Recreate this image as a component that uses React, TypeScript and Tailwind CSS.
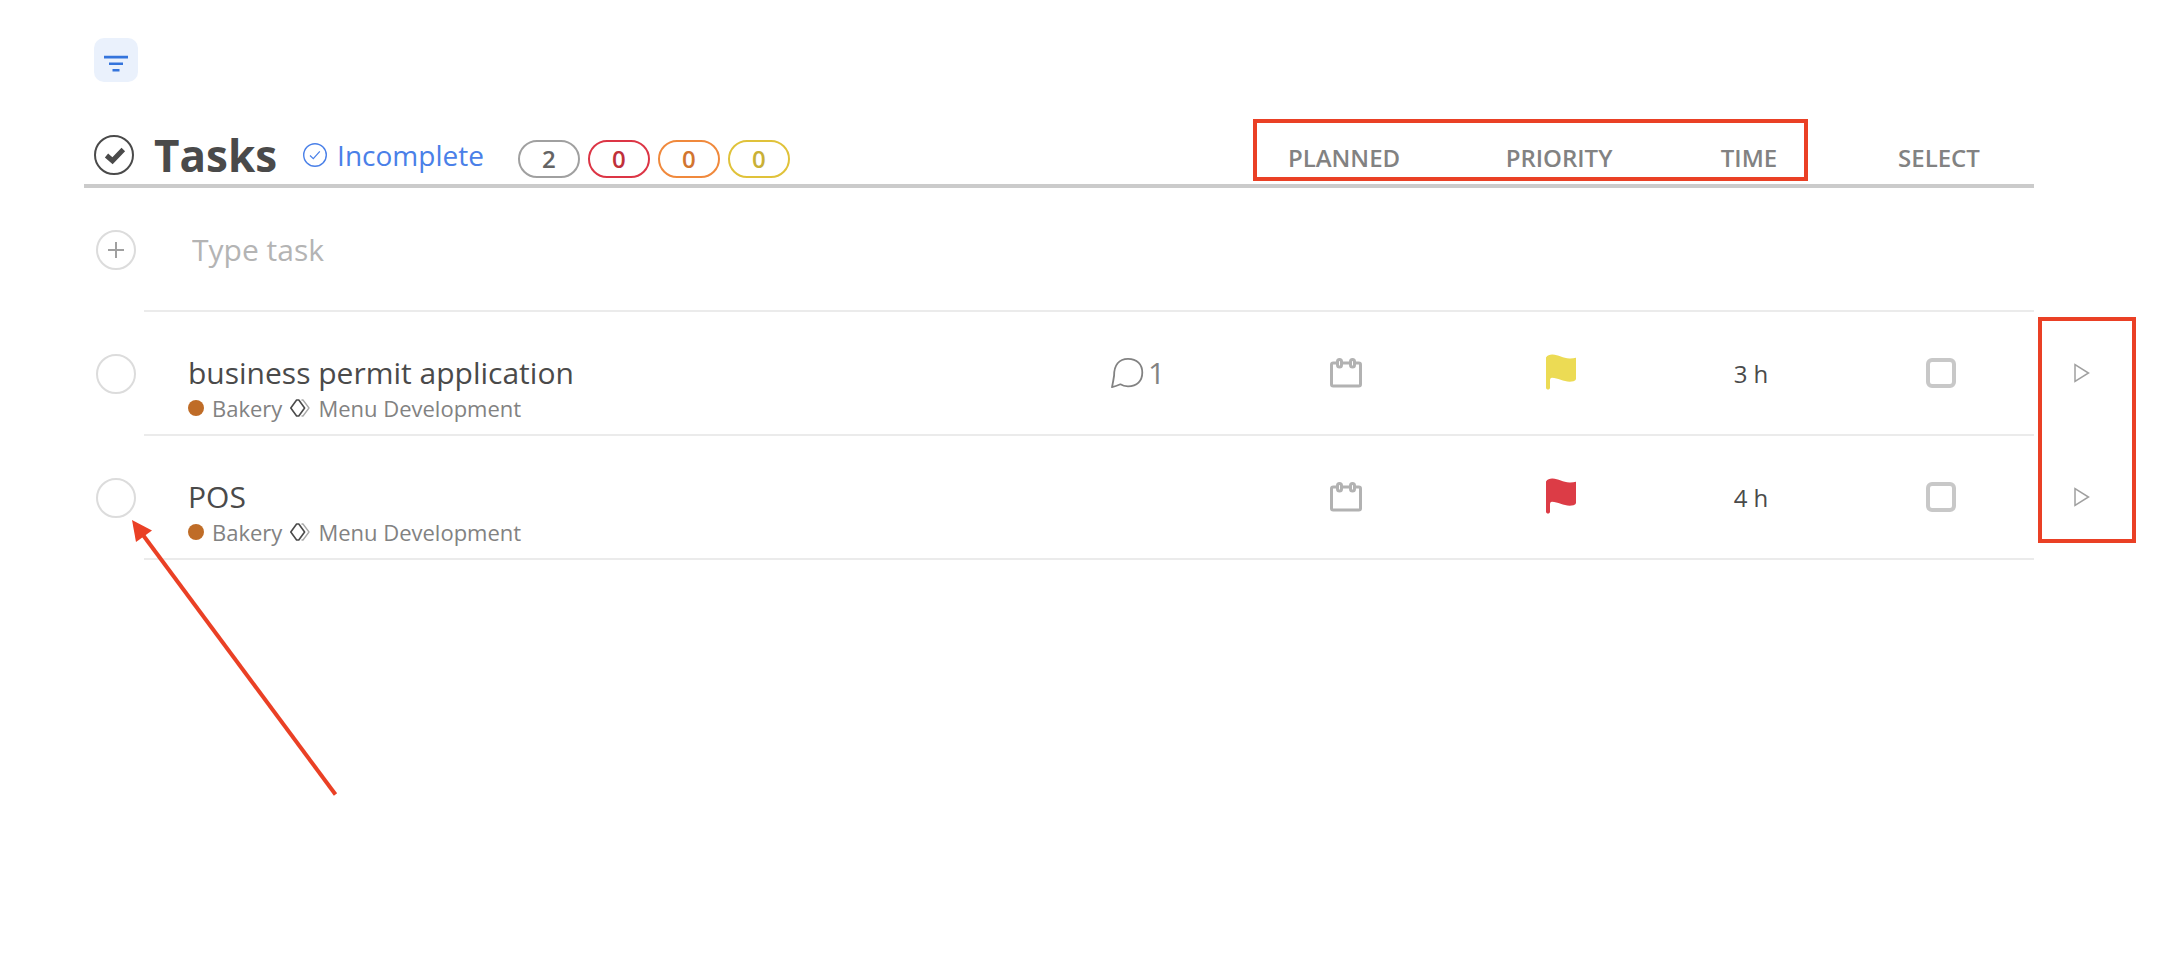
import { useState } from 'react'
import clsx from 'clsx'

type Task = {
  id: string
  name: string
  project: string
  list: string
  comments?: number
  flag: string
  time: string
}

const tasks: Task[] = [
  {
    id: 'permit',
    name: 'business permit application',
    project: 'Bakery',
    list: 'Menu Development',
    comments: 1,
    flag: 'text-[#ecdb54]',
    time: '3 h',
  },
  {
    id: 'pos',
    name: 'POS',
    project: 'Bakery',
    list: 'Menu Development',
    flag: 'text-[#dc3c46]',
    time: '4 h',
  },
]

const counters = [
  { label: 'Open', value: 2, color: 'border-[#a0a0a0] text-[#646464]' },
  { label: 'High', value: 0, color: 'border-[#dc3545] text-[#c0303a]' },
  { label: 'Medium', value: 0, color: 'border-[#f0893c] text-[#d2752f]' },
  { label: 'Low', value: 0, color: 'border-[#e0c23a] text-[#c9b036]' },
]

const FilterIcon = () => (
  <svg width="24" height="18" viewBox="0 0 24 18" fill="currentColor" aria-hidden="true">
    <path d="M0 .8h24v2.6H0zM5 7.5h14v2.6H5zM8.5 14h7v2.6h-7z" />
  </svg>
)

const TasksIcon = () => (
  <svg width="40" height="40" viewBox="0 0 40 40" fill="none" stroke="currentColor" aria-hidden="true">
    <circle cx="20" cy="20" r="19" strokeWidth="2" />
    <path d="m12.500 20.500 6 5.200L29.300 14.500" strokeWidth="5" />
  </svg>
)

const IncompleteIcon = () => (
  <svg width="24" height="24" viewBox="0 0 24 24" fill="none" stroke="currentColor" aria-hidden="true">
    <circle cx="12" cy="12" r="11.3" strokeWidth="1.4" />
    <path d="m7 12.500 3.300 3.200 6.500-7.400" strokeWidth="1.200" />
  </svg>
)

const PlusIcon = () => (
  <svg width="16" height="16" viewBox="0 0 16 16" stroke="currentColor" strokeWidth="2" aria-hidden="true">
    <path d="M8 0v16M0 8h16" />
  </svg>
)

const MilestoneIcon = () => (
  <svg width="20" height="18" viewBox="0 0 20 18" fill="none" strokeLinejoin="round" aria-hidden="true">
    <path d="M11.500 1H13l6 8-6 8h-1.500" stroke="#a8a8a8" strokeWidth="1.300" />
    <path d="M6.600 1h2.200L14.600 9 8.800 17H6.600L.8 9z" stroke="#4a4a4a" strokeWidth="1.600" />
  </svg>
)

const CommentIcon = () => (
  <svg
    width="34"
    height="32"
    viewBox="0 0 34 32"
    fill="none"
    stroke="currentColor"
    strokeWidth="1.800"
    strokeLinejoin="round"
    aria-hidden="true"
  >
    <path d="M2 30.200C3 25.500 3.600 22 4.100 18.500 4 8 9 1.800 18 1.800c9 0 14.300 5.500 14.300 13.700 0 8.500-5.300 13.800-14.300 13.800-2.800 0-5.300-.5-7.600-2-2.700 1.200-5.600 2.300-8.400 2.900z" />
  </svg>
)

const CalendarIcon = () => (
  <svg width="32" height="30" viewBox="0 0 32 30" fill="none" stroke="currentColor" aria-hidden="true">
    <path
      d="M7 5H3.200Q1.500 5 1.500 6.700v19.600Q1.500 28 3.200 28h25.600q1.700 0 1.700-1.700V6.700Q30.500 5 28.800 5H25M12 5h8"
      strokeWidth="3"
    />
    <rect x="7.500" y="1.500" width="4" height="7.500" rx="2" strokeWidth="3" />
    <rect x="20.500" y="1.500" width="4" height="7.500" rx="2" strokeWidth="3" />
  </svg>
)

const FlagIcon = () => (
  <svg width="30" height="36" viewBox="0 0 30 36" fill="currentColor" aria-hidden="true">
    <path d="M0 3.500C1.500 1.200 4 .5 6.500.6c6 .2 10.500 3.700 17 3.900 2.400.1 4.500-.2 6.500-.8v20.800c0 1.500-1 2.300-2.500 2.700-8 2-14.500-3.200-21.500-3.500-1.500 0-2 1-2 3v7c0 2.400-4 2.400-4 0z" />
  </svg>
)

const PlayIcon = () => (
  <svg width="16" height="20" viewBox="0 0 16 20" fill="none" stroke="currentColor" strokeWidth="1.500" aria-hidden="true">
    <path d="M1 1.500v17L14.500 10z" />
  </svg>
)

const ColumnHead = ({ children }: { children: string }) => (
  <th
    scope="col"
    className="border-b-4 border-[#cbcbcb] pt-[14px] pr-0.5 pb-0 pl-0 text-2xl leading-8 font-semibold text-[#828282]"
  >
    {children}
  </th>
)

const TaskRow = ({ task }: { task: Task }) => {
  const [done, setDone] = useState(false)
  const [selected, setSelected] = useState(false)
  const cell = 'border-b-2 border-[#ebebeb] p-0 pl-0.5 text-center'

  return (
    <tr className="h-[124px]">
      <td className="p-0 pl-3">
        <input
          type="checkbox"
          aria-label={`Complete ${task.name}`}
          checked={done}
          onChange={() => setDone(!done)}
          className="block size-10 appearance-none rounded-full border-2 border-[#dcdcdc] checked:bg-[#dcdcdc]"
        />
      </td>
      <td className="border-b-2 border-[#ebebeb] pt-[41px] pr-0 pb-0 pl-11 align-top">
        <div className="text-[30px] leading-10 text-[#4a4a4a]">{task.name}</div>
        <div className="flex items-center text-[22px] leading-[30px] text-[#828282]">
          <span className="mr-2 size-4 rounded-full bg-[#bf6c27]" />
          <span className="mr-2">{task.project}</span>
          <MilestoneIcon />
          <span className="ml-2">{task.list}</span>
        </div>
      </td>
      <td className="border-b-2 border-[#ebebeb] p-0">
        {task.comments && (
          <button type="button" aria-label="Comments" className="flex items-center gap-1 text-[30px] leading-10 text-[#828282]">
            <CommentIcon />
            {task.comments}
          </button>
        )}
      </td>
      <td className={cell}>
        <button type="button" aria-label="Plan task" className="mx-auto block text-[#b2b2b2]">
          <CalendarIcon />
        </button>
      </td>
      <td className={cell}>
        <button type="button" aria-label="Set priority" className={clsx('mx-auto block pb-0.5', task.flag)}>
          <FlagIcon />
        </button>
      </td>
      <td className={clsx(cell, 'pt-0.5 text-2xl leading-8 text-[#4a4a4a]')}>{task.time}</td>
      <td className={cell}>
        <input
          type="checkbox"
          aria-label={`Select ${task.name}`}
          checked={selected}
          onChange={() => setSelected(!selected)}
          className="mx-auto block size-[30px] appearance-none rounded-md border-4 border-[#c8c8c8] checked:bg-[#c8c8c8]"
        />
      </td>
      <td className="p-0 pb-0.5 pl-10">
        <button type="button" aria-label={`Start ${task.name}`} className="block text-[#a0a0a0]">
          <PlayIcon />
        </button>
      </td>
    </tr>
  )
}

export default function App() {
  const [draft, setDraft] = useState('')

  return (
    <main className="min-h-screen bg-white pt-[38px] pl-[84px] font-['Open_Sans',sans-serif]">
      <button
        type="button"
        aria-label="Filter"
        className="ml-[10px] flex size-11 items-center justify-center rounded-[10px] bg-[#eaf1fc] pt-2 text-[#3474dc]"
      >
        <FilterIcon />
      </button>

      <div className="relative mt-9">
        <table className="w-full table-fixed border-separate border-spacing-0">
          <colgroup>
            <col className="w-[60px]" />
            <col />
            <col className="w-[114px]" />
            <col className="w-[242px]" />
            <col className="w-[188px]" />
            <col className="w-[192px]" />
            <col className="w-[188px]" />
            <col className="w-[128px]" />
          </colgroup>
          <thead>
            <tr className="h-[70px]">
              <th colSpan={3} className="border-b-4 border-[#cbcbcb] pt-2 pr-0 pb-0 pl-[10px]">
                <div className="flex h-10 items-center whitespace-nowrap">
                  <span className="text-[#4a4a4a]">
                    <TasksIcon />
                  </span>
                  <h1 className="ml-5 text-[44px] leading-10 font-bold text-[#4a4a4a]">Tasks</h1>
                  <button
                    type="button"
                    className="ml-[26px] flex items-center gap-[10px] text-[28px] leading-10 font-normal text-[#4a80e8]"
                  >
                    <IncompleteIcon />
                    Incomplete
                  </button>
                  <div className="mt-2 ml-[34px] flex gap-2">
                    {counters.map(({ label, value, color }) => (
                      <span
                        key={label}
                        title={label}
                        className={clsx(
                          'flex h-[38px] w-[62px] items-center justify-center rounded-full border-2 text-2xl leading-8 font-semibold',
                          color,
                        )}
                      >
                        {value}
                      </span>
                    ))}
                  </div>
                </div>
              </th>
              <ColumnHead>PLANNED</ColumnHead>
              <ColumnHead>PRIORITY</ColumnHead>
              <ColumnHead>TIME</ColumnHead>
              <ColumnHead>SELECT</ColumnHead>
              <td />
            </tr>
          </thead>
          <tbody>
            <tr className="h-[124px]">
              <td className="p-0 pl-3">
                <button
                  type="button"
                  aria-label="Add task"
                  className="flex size-10 items-center justify-center rounded-full border-2 border-[#dcdcdc] text-[#a0a0a0]"
                >
                  <PlusIcon />
                </button>
              </td>
              <td colSpan={6} className="border-b-2 border-[#ebebeb] p-0 pt-0.5 pl-12">
                <input
                  type="text"
                  aria-label="Type task"
                  placeholder="Type task"
                  value={draft}
                  onChange={(e) => setDraft(e.target.value)}
                  className="block h-10 w-full text-[30px] leading-10 text-[#4a4a4a] outline-none placeholder:text-[#b4b4b4]"
                />
              </td>
              <td />
            </tr>
            {tasks.map((task) => (
              <TaskRow key={task.id} task={task} />
            ))}
          </tbody>
        </table>

        {/* callouts drawn over the list */}
        <div className="pointer-events-none absolute top-px right-[354px] h-[62px] w-[555px] border-4 border-[#ea4025]" />
        <div className="pointer-events-none absolute top-[199px] right-[26px] h-[226px] w-[98px] border-4 border-[#ea4025]" />
        <svg
          width="206"
          height="278"
          viewBox="0 0 206 278"
          className="pointer-events-none absolute top-[402px] left-12 text-[#ea4025]"
          aria-hidden="true"
        >
          <path d="M11 15 203.500 274.500" stroke="currentColor" strokeWidth="4" />
          <path d="M0 0 20 10.500 4 22z" fill="currentColor" />
        </svg>
      </div>
    </main>
  )
}
